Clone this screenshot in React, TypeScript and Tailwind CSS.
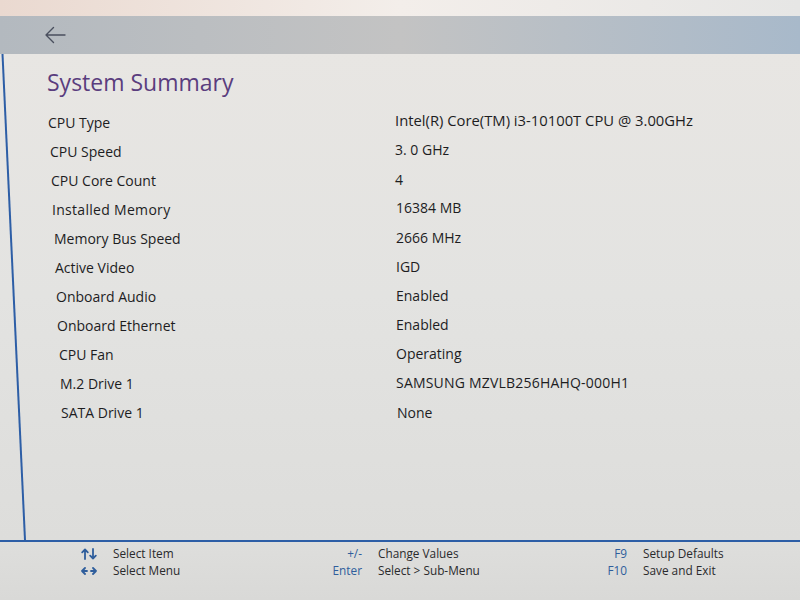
import React from "react";

const rows: { label: string; value: string; lp: string; vp: string }[] = [
  { label: "CPU Type", value: "Intel(R) Core(TM) i3-10100T CPU @ 3.00GHz", lp: "pl-[48px]", vp: "pl-[0px] -translate-y-[3px] text-[14.8px]" },
  { label: "CPU Speed", value: "3. 0 GHz", lp: "pl-[50px]", vp: "pl-[0px] -translate-y-[2px]" },
  { label: "CPU Core Count", value: "4", lp: "pl-[51px]", vp: "pl-[0px] -translate-y-[1px]" },
  { label: "Installed Memory", value: "16384 MB", lp: "pl-[52px] tracking-[0.3px]", vp: "pl-[1px] -translate-y-[2px]" },
  { label: "Memory Bus Speed", value: "2666 MHz", lp: "pl-[54px]", vp: "pl-[1px] -translate-y-[1px]" },
  { label: "Active Video", value: "IGD", lp: "pl-[55px]", vp: "pl-[1px] -translate-y-[1px]" },
  { label: "Onboard Audio", value: "Enabled", lp: "pl-[56px]", vp: "pl-[1px] -translate-y-[1px]" },
  { label: "Onboard Ethernet", value: "Enabled", lp: "pl-[57px]", vp: "pl-[1px] -translate-y-[1px]" },
  { label: "CPU Fan", value: "Operating", lp: "pl-[59px]", vp: "pl-[1px] -translate-y-[1px]" },
  { label: "M.2 Drive 1", value: "SAMSUNG MZVLB256HAHQ-000H1", lp: "pl-[60px]", vp: "pl-[1px] -translate-y-[1px] tracking-[0.2px]" },
  { label: "SATA Drive 1", value: "None", lp: "pl-[61px]", vp: "pl-[2px]" },
];

function UpDown() {
  return (
    <svg width="16" height="12" viewBox="0 0 16 12" fill="none" stroke="#2f5e9c" strokeWidth="1.8" strokeLinecap="round" strokeLinejoin="round">
      <path d="M4 11V1.5M1.2 4.3L4 1.5l2.8 2.8" />
      <path d="M12 1v9.5M9.2 7.7L12 10.5l2.8-2.8" />
    </svg>
  );
}

function LeftRight() {
  return (
    <svg width="16" height="10" viewBox="0 0 16 10" fill="none" stroke="#2f5e9c" strokeWidth="1.8" strokeLinecap="round" strokeLinejoin="round">
      <path d="M4 2L1 5l3 3M1 5h5" />
      <path d="M12 2l3 3-3 3M10 5h5" />
    </svg>
  );
}

export default function App() {
  return (
    <div
      className="relative w-[800px] h-[600px] overflow-hidden bg-[#e0e0de] text-[#1d1d1f]"
      style={{ fontFamily: '"Open Sans", "Noto Sans", "Liberation Sans", sans-serif' }}
    >
      {/* top glare strip */}
      <div className="h-[16px] bg-gradient-to-r from-[#ead9d0] via-[#f3eeea] to-[#e6e6e5]" />
      {/* header bar */}
      <div className="h-[38px] flex items-center pl-[44px] bg-gradient-to-r from-[#b3b9bf] via-[#c3c3c3] to-[#a8b9ca]">
        <svg width="22" height="18" viewBox="0 0 22 18" fill="none" stroke="#4a4f5e" strokeWidth="1.4" strokeLinecap="round" strokeLinejoin="round">
          <path d="M21 9H2M9.5 1.5L2 9l7.5 7.5" />
        </svg>
      </div>
      {/* main */}
      <div className="relative h-[486px] bg-gradient-to-b from-[#e8e6e3] via-[#e3e3e1] to-[#dddddb]">
        <svg className="absolute left-0 top-0 pointer-events-none" width="40" height="486">
          <line x1="2.5" y1="0" x2="25" y2="486" stroke="#2d5ea6" strokeWidth="2" />
        </svg>
        <div className="pt-[12px] pl-[47px] text-[23px] leading-[32px] text-[#5a3d7e]">System Summary</div>
        <div className="mt-[10px]">
          {rows.map((r) => (
            <div key={r.label} className="grid grid-cols-[395px_1fr] h-[29px] items-center text-[14px] leading-[20px]">
              <div className={r.lp}>{r.label}</div>
              <div className={r.vp}>{r.value}</div>
            </div>
          ))}
        </div>
      </div>
      {/* bottom line */}
      <div className="h-[2px] bg-[#2d5ea6]" />
      {/* footer */}
      <div className="h-[58px] pt-[3px] bg-gradient-to-b from-[#dededc] to-[#d9d9d7] text-[11.8px] leading-[17px] text-[#2a2a2c]">
        <div className="flex pl-[67px]">
          <div className="w-[30px] flex justify-end items-center h-[17px]"><UpDown /></div>
          <div className="ml-[16px] w-[219px]">Select Item</div>
          <div className="w-[30px] text-right text-[#2f5e9c]">+/-</div>
          <div className="ml-[16px] w-[219px]">Change Values</div>
          <div className="w-[30px] text-right text-[#2f5e9c]">F9</div>
          <div className="ml-[16px]">Setup Defaults</div>
        </div>
        <div className="flex pl-[67px]">
          <div className="w-[30px] flex justify-end items-center h-[17px]"><LeftRight /></div>
          <div className="ml-[16px] w-[219px]">Select Menu</div>
          <div className="w-[30px] text-right text-[#2f5e9c]">Enter</div>
          <div className="ml-[16px] w-[219px]">Select &gt; Sub-Menu</div>
          <div className="w-[30px] text-right text-[#2f5e9c]">F10</div>
          <div className="ml-[16px]">Save and Exit</div>
        </div>
      </div>
    </div>
  );
}
